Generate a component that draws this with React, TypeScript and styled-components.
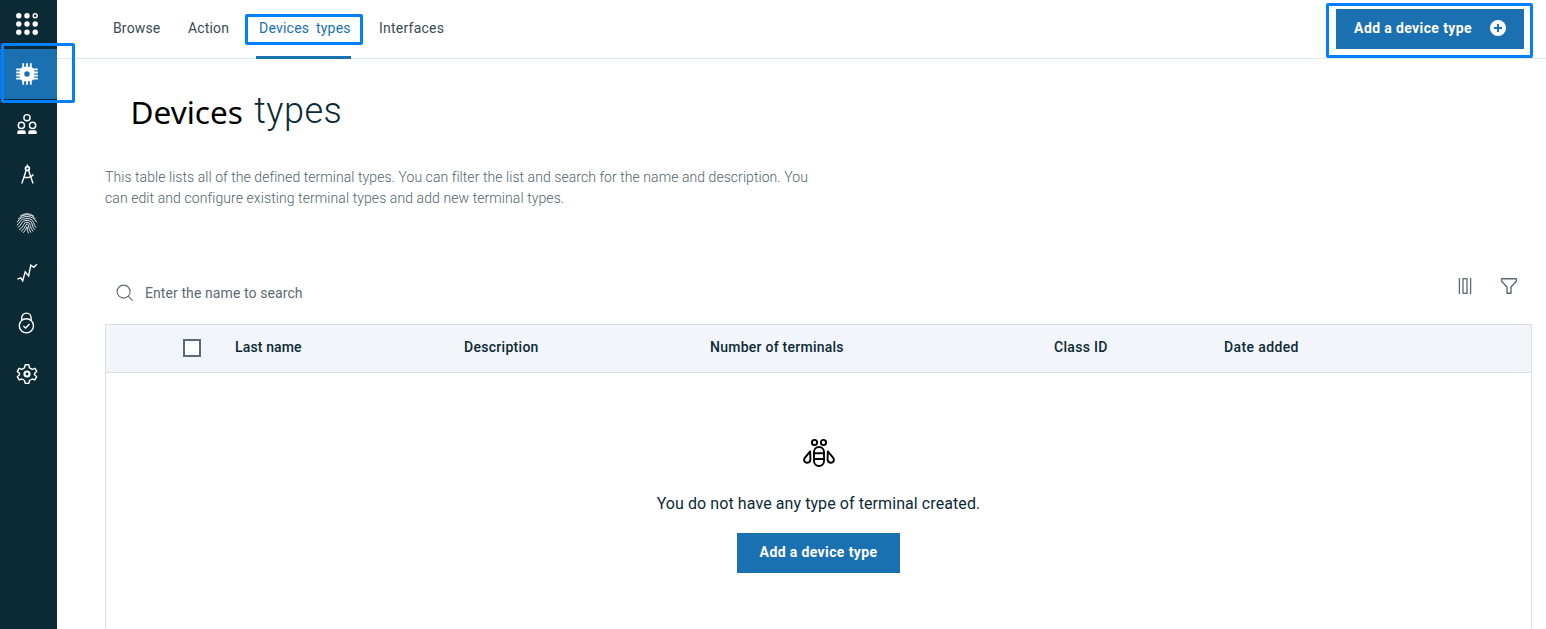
import React from "react";
import styled, { createGlobalStyle, css } from "styled-components";

const color = {
  navy: "#0c2a35",
  blue: "#1a70b0",
  focus: "#0080ff",
  slate: "#5a6b75",
  line: "#dadfe3",
  headerLine: "#dcebe8",
};

const GlobalStyle = createGlobalStyle`
  * { box-sizing: border-box; }
  body {
    margin: 0;
    background: #fff;
    color: ${color.navy};
    font-family: Roboto, "Liberation Sans", sans-serif;
    overflow: hidden;
  }
  h1, p { margin: 0; }
  button { font-family: inherit; }
`;

const Page = styled.div`
  display: flex;
  height: 629px;
`;

const Sidebar = styled.nav`
  display: flex;
  flex-direction: column;
  flex: 0 0 57px;
  background: ${color.navy};
`;

const SideItem = styled.a<{ $active?: boolean; $first?: boolean; $lift?: number }>`
  position: relative;
  display: flex;
  align-items: center;
  justify-content: center;
  height: ${(p) => (p.$first ? 49 : 50)}px;
  padding: 0 3px ${(p) => p.$lift ?? 0}px 0;
  background: ${(p) => (p.$active ? color.blue : "transparent")};
`;

const highlight = css`
  position: absolute;
  border: 3px solid ${color.focus};
  border-radius: 2px;
  pointer-events: none;
`;

const SideHighlight = styled.span`
  ${highlight}
  left: 1px;
  top: -6px;
  width: 74px;
  height: 60px;
  z-index: 2;
`;

const TabHighlight = styled.span`
  ${highlight}
  left: -11px;
  top: 14px;
  width: 118px;
  height: 31px;
`;

const ButtonHighlight = styled.span`
  ${highlight}
  inset: -6px -9px -9px -10px;
`;

const Icon = styled.svg`
  display: block;
  flex: none;
  fill: none;
  stroke: currentColor;
`;

const SideIcon = styled(Icon).attrs({ width: 24, height: 24, viewBox: "0 0 24 24" })`
  color: #fff;
  stroke-width: 1.4;
`;

const Main = styled.main`
  display: flex;
  flex-direction: column;
  flex: 1;
  min-width: 0;
`;

const Header = styled.header`
  display: flex;
  justify-content: space-between;
  flex: 0 0 59px;
  padding: 0 22px 0 56px;
  border-bottom: 1px solid ${color.headerLine};
`;

const Tabs = styled.div`
  display: flex;
  height: 59px;
  margin-bottom: -1px;
`;

const Tab = styled.a<{ $width: number; $spacing: number; $active?: boolean }>`
  position: relative;
  width: ${(p) => p.$width}px;
  font-size: 14px;
  line-height: 56px;
  letter-spacing: ${(p) => p.$spacing}px;
  white-space: nowrap;
  color: #394b54;
  ${(p) =>
    p.$active &&
    css`
      margin-right: 28px;
      padding-left: 3px;
      color: ${color.blue};
      word-spacing: 3px;
      border-bottom: 3px solid ${color.blue};
    `}
`;

const AddButton = styled.button<{ $width: number }>`
  position: relative;
  display: flex;
  align-items: center;
  justify-content: center;
  gap: 18px;
  width: ${(p) => p.$width}px;
  height: 40px;
  padding: 0 0 2px;
  border: 0;
  background: ${color.blue};
  color: #fff;
  font-size: 14px;
  font-weight: 700;
  letter-spacing: 0.38px;
  white-space: nowrap;
`;

const HeaderAction = styled.div`
  padding-top: 9px;
`;

const Content = styled.section`
  display: flex;
  flex-direction: column;
  flex: 1;
  padding: 0 14px 0 48px;
`;

const Title = styled.h1`
  display: flex;
  gap: 11.5px;
  height: 59px;
  margin-top: 25px;
  padding-left: 25.5px;
  font-weight: 400;
`;

const TitleLead = styled.span`
  color: #000;
  font: 400 31.5px/56px "Noto Sans", sans-serif;
`;

const TitleRest = styled.span`
  font-size: 36px;
  font-weight: 300;
  line-height: 54px;
  letter-spacing: 0.5px;
`;

const Intro = styled.p`
  margin-top: 24px;
  color: #50636d;
  font-size: 14px;
  font-weight: 300;
  line-height: 21px;
  white-space: nowrap;
`;

const IntroLine = styled.span<{ $spacing: number }>`
  display: block;
  letter-spacing: ${(p) => p.$spacing}px;
`;

const Toolbar = styled.div`
  display: flex;
  justify-content: space-between;
  height: 48px;
  margin-top: 67px;
  padding: 0 14px 0 11px;
  color: ${color.slate};
`;

const Search = styled.label`
  display: flex;
  align-items: center;
  gap: 11px;
  padding-bottom: 14px;
  font-size: 14px;
  letter-spacing: 0.09px;
`;

const Tools = styled.div`
  display: flex;
  gap: 26px;
  padding-top: 2px;
`;

const Table = styled.div`
  display: flex;
  flex-direction: column;
  flex: 1;
  border: 1px solid ${color.line};
  border-bottom: 0;
`;

const HeadRow = styled.div`
  display: grid;
  grid-template-columns: 52px 229px 246px 344px 170px 1fr;
  align-items: center;
  height: 47px;
  padding: 0 0 3px 77px;
  background: #f2f5fa;
  font-size: 14px;
  font-weight: 500;
`;

const HeadCell = styled.span<{ $spacing: number }>`
  letter-spacing: ${(p) => p.$spacing}px;
`;

const Checkbox = styled.span`
  width: 18px;
  height: 18px;
  margin-top: 1px;
  border: 2px solid ${color.slate};
  background: #fff;
`;

const Empty = styled.div`
  display: flex;
  flex-direction: column;
  align-items: center;
  flex: 1;
  padding-top: 64px;
  border-top: 1px solid ${color.line};
`;

const EmptyText = styled.p`
  margin: 23px 0 17px;
  font-size: 16px;
  line-height: 24px;
  letter-spacing: 0.08px;
`;

const GridIcon = () => (
  <SideIcon>
    {[3.8, 12, 20.2].map((y) =>
      [3.8, 12, 20.2].map((x) =>
        x > 20 && y < 4 ? (
          <circle key={x + "-" + y} cx={x} cy={y} r="2" />
        ) : (
          <circle key={x + "-" + y} cx={x} cy={y} r="2.7" fill="#fff" stroke="none" />
        ),
      ),
    )}
  </SideIcon>
);

const ChipIcon = () => (
  <SideIcon>
    <path
      fill="#fff"
      fillRule="evenodd"
      stroke="none"
      d="M7.5 4.8H16.5L19.2 7.5V16.5L16.5 19.2H7.5L4.8 16.5V7.5ZM12 9.2a2.8 2.8 0 1 0 0 5.6a2.8 2.8 0 1 0 0-5.6Z"
    />
    <path d="M8.2 1.2V22.8M12 1.2V5M12 19V22.8M15.8 1.2V22.8M1.2 7.4H6M1.2 10.5H6M1.2 13.6H6M1.2 16.7H6M18 7.4H22.8M18 10.5H22.8M18 13.6H22.8M18 16.7H22.8" strokeWidth="1.8" />
  </SideIcon>
);

const TeamIcon = () => (
  <SideIcon strokeWidth="1.4">
    <circle cx="12" cy="5.7" r="3.1" />
    <circle cx="6.4" cy="13.4" r="3.1" />
    <circle cx="17.6" cy="13.4" r="3.1" />
    <path d="M2.3 22V20Q2.3 18.3 4 18.3H9Q10.7 18.3 10.7 20V22ZM13.3 22V20Q13.3 18.3 15 18.3H20Q21.7 18.3 21.7 20V22Z" fill="#fff" stroke="none" />
  </SideIcon>
);

const CompassIcon = () => (
  <SideIcon>
    <path d="M12.4 2.5V5M11.3 8L6.8 21.5M13.5 8L18 21.5M9 15.5H13.5Q16 15.5 18.4 12.5" />
    <circle cx="12.4" cy="6.6" r="1.9" strokeWidth="1.7" />
  </SideIcon>
);

const FingerprintIcon = () => (
  <SideIcon strokeLinecap="round" opacity="0.9">
    <path d="M5.5 4.8Q12 .2 18.7 5M3.3 7.8Q7 3.6 12 3.6Q17.2 3.6 20.4 7.6M2.4 11Q5.3 5.5 12 5.5Q18.6 5.5 21.5 11" strokeWidth="0.95" />
    <path d="M2.2 14Q4.4 12.4 4.8 10.6Q6.6 7.5 12 7.5Q18.6 7.5 19.4 14.5L21 16.4M3 16.4Q6.1 14.6 6.9 11.4Q8.4 9.4 12 9.4Q16.9 9.4 17.4 14.2Q17.8 17 19.6 18.5" strokeWidth="0.95" />
    <path d="M4.4 18.7Q7.5 17.2 8.8 13.5Q9.4 11.2 12 11.2Q15.4 11.4 15.4 14.6Q15.9 18.2 18 20.2M6.2 20.3Q9.4 18 10.5 14.8Q10.9 13 12.2 13Q13.5 13.2 13.5 15Q14 19 15.8 21.3M8.5 21.5Q11 19 12 15.7Q12.1 19.3 13.4 22" strokeWidth="0.95" />
  </SideIcon>
);

const TrendIcon = () => (
  <SideIcon>
    <path d="M2.4 18.1L5.8 16.8L7.7 19.8L10.2 10.9L13.6 15L15.8 4.2L18.8 6.3L21.8 3.2" />
  </SideIcon>
);

const LockIcon = () => (
  <SideIcon>
    <circle cx="11.4" cy="14.8" r="7.1" />
    <path d="M6.7 9.1V6.8A4.7 4.7 0 0 1 16.1 6.8V9.1M8.4 14.9L10.6 17L14.5 12.9" />
  </SideIcon>
);

const GearIcon = () => (
  <SideIcon strokeLinejoin="round">
    <path d="M10.2 2.8H13.8L14.5 5.8L17.2 7.3L20 6.3L21.7 9.4L19.5 11.6V12.8L21.7 14.7L19.8 17.9L17.1 17L14.5 18.5L13.8 21.4H10.2L9.5 18.5L6.9 17L4.2 17.9L2.3 14.7L4.5 12.8V11.3L2.3 9.4L4.1 6.3L6.8 7.3L9.5 5.8Z" />
    <circle cx="12" cy="12" r="3.6" fill="#fff" stroke="none" />
    <circle cx="12" cy="12" r="1.4" fill={color.navy} stroke="none" />
  </SideIcon>
);

const PlusIcon = () => (
  <Icon width="16" height="16" viewBox="0 0 16 16">
    <circle cx="8" cy="8" r="8" fill="#fff" stroke="none" />
    <path d="M8 4V12M4 8H12" stroke={color.blue} strokeWidth="2" />
  </Icon>
);

const SearchIcon = () => (
  <Icon width="18" height="18" viewBox="0 0 18 18" strokeWidth="1.1">
    <circle cx="7.6" cy="7.6" r="6.5" />
    <path d="M12.2 12.2L16.6 16.6" />
  </Icon>
);

const ColumnsIcon = () => (
  <Icon width="16" height="16" viewBox="0 0 16 16" strokeWidth="1.3">
    <path d="M1.4 0V16M12.6 0V16" />
    <rect x="5" y=".7" width="4" height="14.6" />
  </Icon>
);

const FilterIcon = () => (
  <Icon width="18" height="16" viewBox="0 0 18 16" strokeWidth="1.4" strokeLinejoin="round">
    <path d="M1.6.8H16.4V3.3L11 9V15.2H7V9L1.6 3.3Z" />
  </Icon>
);

const BeeIcon = () => (
  <Icon width="32" height="32" viewBox="0 0 32 32" color="#000" strokeWidth="1.9">
    <circle cx="11.5" cy="5.5" r="2.6" />
    <circle cx="20.5" cy="5.5" r="2.6" />
    <path d="M11 15A5 5 0 0 1 21 15V24A5 5 0 0 1 11 24ZM11 16.2H21M11 22H21" />
    <path d="M7.2 14.4L2.2 20.3C-.2 23.2 1.8 26 4.5 25.8C6.6 25.6 7.4 24 7.4 22ZM24.8 14.4L29.8 20.3C32.2 23.2 30.2 26 27.5 25.8C25.4 25.6 24.6 24 24.6 22Z" strokeLinejoin="round" />
  </Icon>
);

const columns = [
  { label: "Last name", spacing: 0.14 },
  { label: "Description", spacing: 0.29 },
  { label: "Number of terminals", spacing: 0.25 },
  { label: "Class ID", spacing: 0.3 },
  { label: "Date added", spacing: 0.38 },
];

export default function App() {
  return (
    <Page>
      <GlobalStyle />
      <Sidebar>
        <SideItem $first $lift={1}><GridIcon /></SideItem>
        <SideItem $active>
          <ChipIcon />
          <SideHighlight />
        </SideItem>
        <SideItem><TeamIcon /></SideItem>
        <SideItem><CompassIcon /></SideItem>
        <SideItem $lift={2}><FingerprintIcon /></SideItem>
        <SideItem $lift={3}><TrendIcon /></SideItem>
        <SideItem $lift={2}><LockIcon /></SideItem>
        <SideItem><GearIcon /></SideItem>
      </Sidebar>
      <Main>
        <Header>
          <Tabs>
            <Tab $width={75} $spacing={0.15}>Browse</Tab>
            <Tab $width={68} $spacing={0.15}>Action</Tab>
            <Tab $width={95} $spacing={0.22} $active>
              Devices types
              <TabHighlight />
            </Tab>
            <Tab $width={70} $spacing={0.24}>Interfaces</Tab>
          </Tabs>
          <HeaderAction>
            <AddButton $width={188}>
              Add a device type
              <PlusIcon />
              <ButtonHighlight />
            </AddButton>
          </HeaderAction>
        </Header>
        <Content>
          <Title>
            <TitleLead>Devices</TitleLead>
            <TitleRest>types</TitleRest>
          </Title>
          <Intro>
            <IntroLine $spacing={0.06}>
              This table lists all of the defined terminal types. You can filter the list and search for the name and description. You
            </IntroLine>
            <IntroLine $spacing={0.085}>
              can edit and configure existing terminal types and add new terminal types.
            </IntroLine>
          </Intro>
          <Toolbar>
            <Search>
              <SearchIcon />
              Enter the name to search
            </Search>
            <Tools>
              <ColumnsIcon />
              <FilterIcon />
            </Tools>
          </Toolbar>
          <Table>
            <HeadRow>
              <Checkbox />
              {columns.map((c) => (
                <HeadCell key={c.label} $spacing={c.spacing}>{c.label}</HeadCell>
              ))}
            </HeadRow>
            <Empty>
              <BeeIcon />
              <EmptyText>You do not have any type of terminal created.</EmptyText>
              <AddButton $width={163}>Add a device type</AddButton>
            </Empty>
          </Table>
        </Content>
      </Main>
    </Page>
  );
}
